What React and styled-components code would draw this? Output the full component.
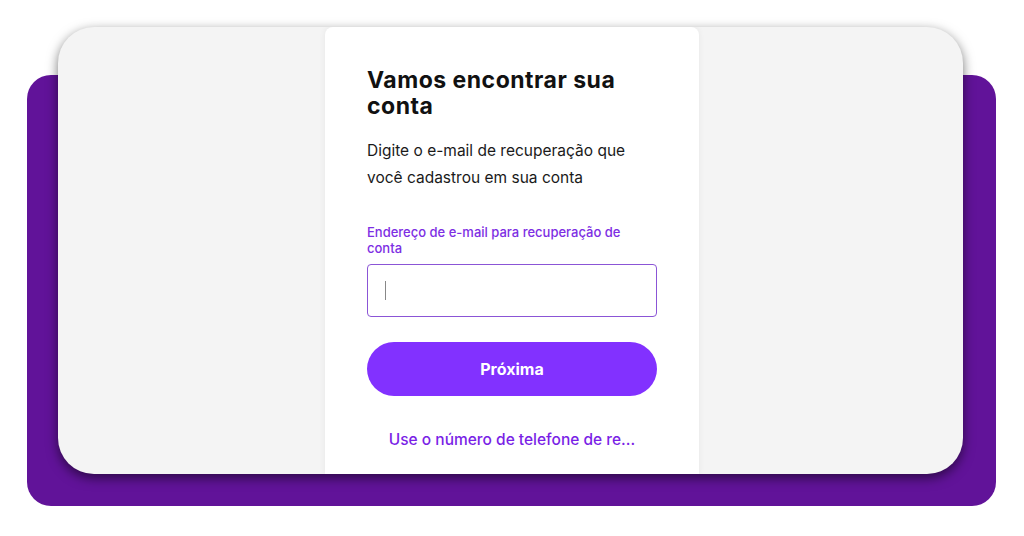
import React from "react";
import styled, { createGlobalStyle } from "styled-components";

const GlobalStyle = createGlobalStyle`
  html, body {
    margin: 0;
    padding: 0;
    background: #ffffff;
  }
  body {
    font-family: "Inter", "Liberation Sans", sans-serif;
  }
`;

const Page = styled.div`
  width: 1024px;
  height: 536px;
  overflow: hidden;
  padding-top: 75px;
  padding-left: 27px;
  box-sizing: border-box;
`;

const Backdrop = styled.div`
  display: flex;
  align-items: flex-start;
  width: 969px;
  height: 431px;
  padding-left: 31px;
  box-sizing: border-box;
  background: #611399;
  border-radius: 24px;
`;

const Screen = styled.div`
  display: flex;
  margin-top: -48px;
  width: 905px;
  height: 447px;
  background: #f4f4f4;
  border-radius: 36px;
  overflow: hidden;
  box-shadow: 0 4px 12px rgba(0, 0, 0, 0.55);
`;

const Sheet = styled.div`
  display: flex;
  flex-direction: column;
  margin-left: 267px;
  width: 374px;
  padding: 40px 42px 0;
  box-sizing: border-box;
  background: #ffffff;
  border-radius: 8px 8px 0 0;
  box-shadow: 0 0 6px rgba(0, 0, 0, 0.06);
`;

const Title = styled.h1`
  margin: 0;
  font-family: "Inter", sans-serif;
  font-size: 23px;
  line-height: 26px;
  font-weight: 700;
  color: #111111;
  letter-spacing: 0.5px;
`;

const Lead = styled.p`
  margin: 18px 0 0;
  font-size: 15.5px;
  line-height: 27px;
  color: #1a1a1a;
`;

const Field = styled.label`
  display: flex;
  flex-direction: column;
  margin-top: 33px;
`;

const FieldLabel = styled.span`
  font-size: 13px;
  line-height: 16px;
  font-weight: 500;
  color: #7d2ee3;
`;

const Input = styled.div`
  display: flex;
  align-items: center;
  margin-top: 8px;
  height: 53px;
  padding-left: 17px;
  box-sizing: border-box;
  border: 1px solid #8b55d6;
  border-radius: 4px;
  background: #ffffff;
`;

const Caret = styled.span`
  width: 1px;
  height: 19px;
  background: #888888;
`;

const Primary = styled.button`
  margin-top: 25px;
  height: 54px;
  border: none;
  border-radius: 27px;
  background: #8231ff;
  color: #ffffff;
  font-family: "Inter", sans-serif;
  font-size: 16px;
  font-weight: 700;
  cursor: pointer;
`;

const LinkButton = styled.button`
  margin-top: 34px;
  border: none;
  background: none;
  padding: 0;
  font-family: "Inter", sans-serif;
  font-size: 15.5px;
  font-weight: 500;
  color: #7a1fe6;
  cursor: pointer;
`;

const App = () => {
  return (
    <>
      <GlobalStyle />
      <Page>
        <Backdrop>
          <Screen>
            <Sheet>
              <Title>Vamos encontrar sua conta</Title>
              <Lead>
                Digite o e-mail de recuperação que você cadastrou em sua conta
              </Lead>
              <Field>
                <FieldLabel>
                  Endereço de e-mail para recuperação de conta
                </FieldLabel>
                <Input>
                  <Caret />
                </Input>
              </Field>
              <Primary>Próxima</Primary>
              <LinkButton>Use o número de telefone de re...</LinkButton>
            </Sheet>
          </Screen>
        </Backdrop>
      </Page>
    </>
  );
};

export default App;
